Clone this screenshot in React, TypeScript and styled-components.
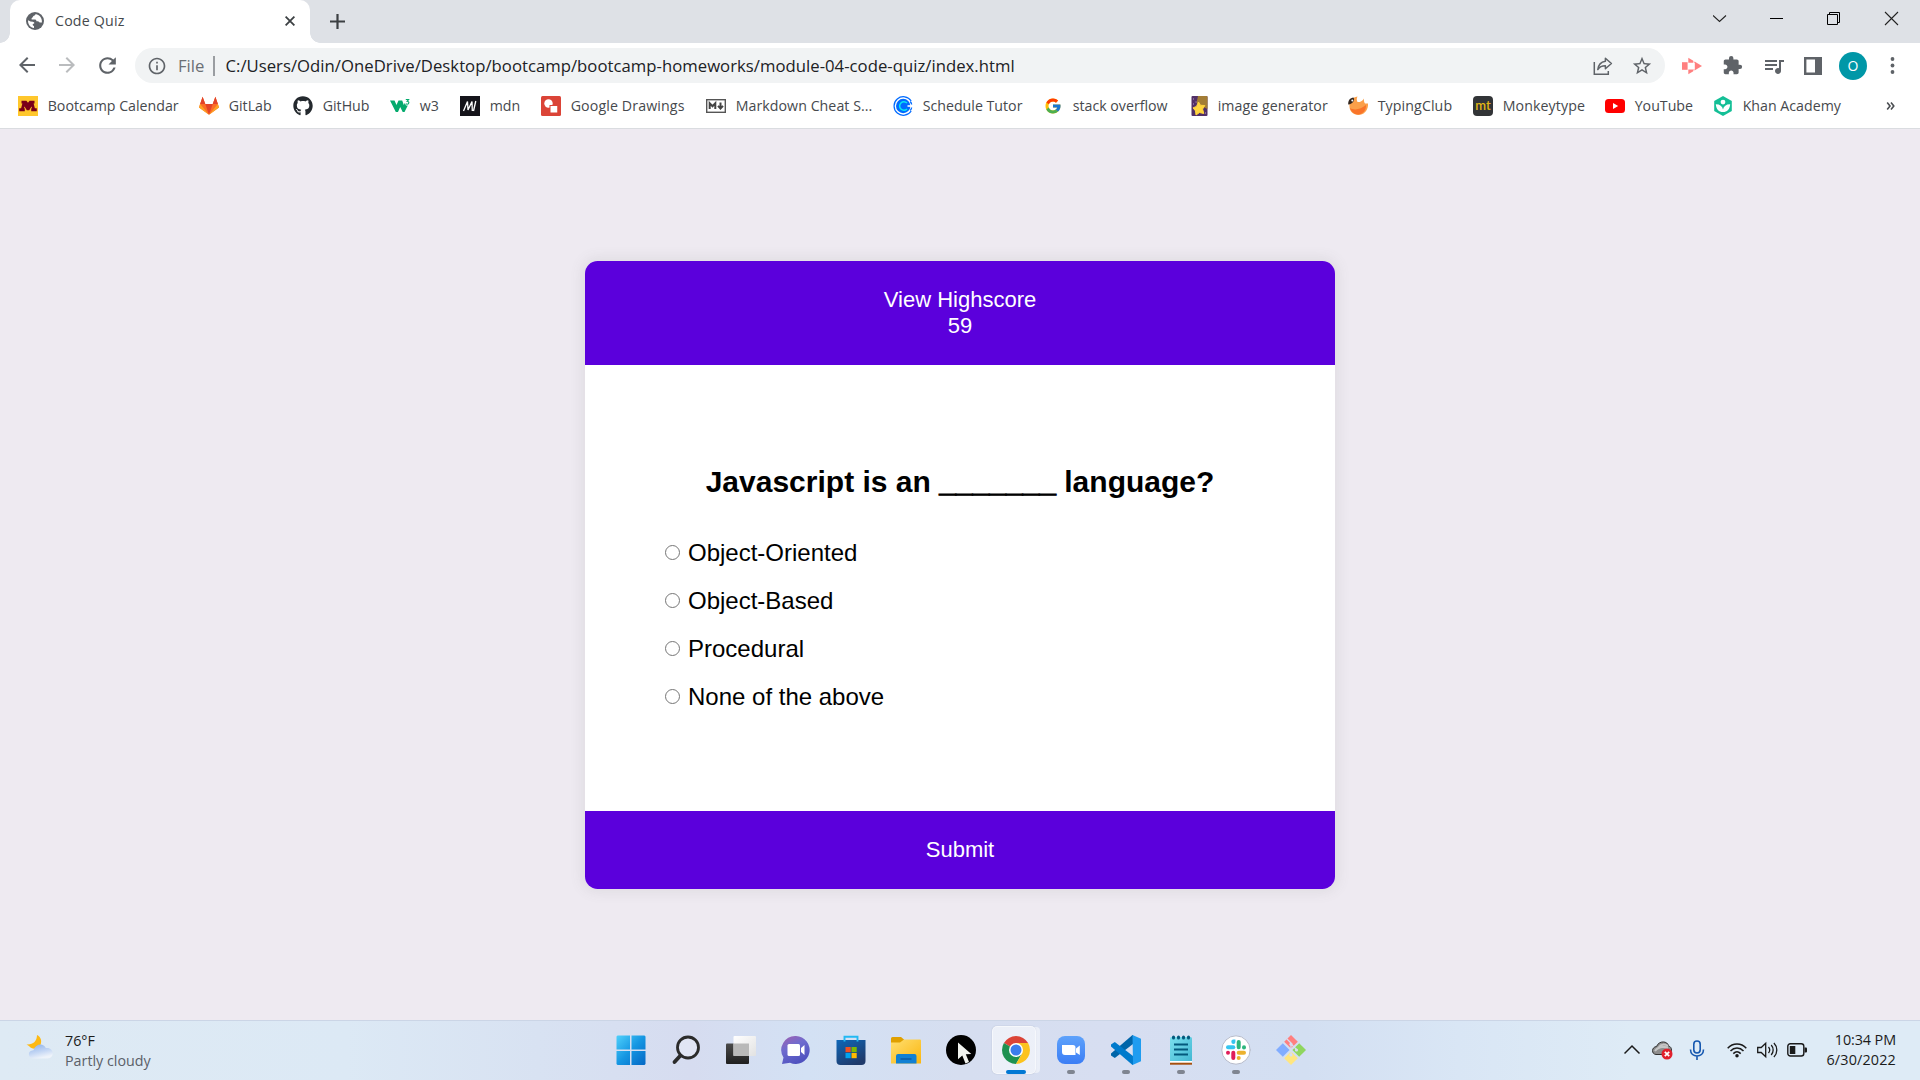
import React from "react";
import styled, { createGlobalStyle } from "styled-components";
import { MdArrowBack, MdArrowForward, MdRefresh, MdExtension, MdQueueMusic, MdStarBorder, MdInfoOutline } from "react-icons/md";
import { FaGithub } from "react-icons/fa";
import { FcGoogle } from "react-icons/fc";

const ui = `"Segoe UI", "Open Sans", "Noto Sans", sans-serif`;

const Global = createGlobalStyle`
  * { box-sizing: border-box; }
  html, body { margin: 0; padding: 0; }
  body { overflow: hidden; font-family: ${ui}; }
  svg { display: block; flex: none; }
`;

const Screen = styled.div`
  width: 1920px;
  height: 1080px;
  display: flex;
  flex-direction: column;
  background: #eeeaf1;
`;

/* ---------- tab strip ---------- */
const TabStrip = styled.header`
  height: 43px;
  display: flex;
  align-items: stretch;
  background: #dee1e6;
  padding-left: 10px;
`;
const Tab = styled.div`
  position: relative;
  width: 300px;
  display: flex;
  align-items: center;
  padding: 0 15px 1px 16px;
  background: #fff;
  border-radius: 10px 10px 0 0;
  font-size: 14.2px;
  color: #45494d;
  &::before, &::after {
    content: "";
    position: absolute;
    bottom: 0;
    width: 10px;
    height: 10px;
  }
  &::before { left: -10px; background: radial-gradient(circle at 0 0, transparent 9.5px, #fff 10px); }
  &::after { right: -10px; background: radial-gradient(circle at 100% 0, transparent 9.5px, #fff 10px); }
`;
const TabTitle = styled.span`
  flex: 1;
  padding: 0 0 1px 11px;
  letter-spacing: 0.2px;
`;
const NewTab = styled.div`
  padding: 13px 0 0 20px;
  flex: 1;
`;
const WindowControls = styled.div`
  display: flex;
  padding-top: 11px;
  gap: 41px;
  padding-right: 20px;
`;

/* ---------- toolbar ---------- */
const Toolbar = styled.div`
  height: 45px;
  display: flex;
  align-items: center;
  background: #fff;
  color: #5f6368;
`;
const NavButtons = styled.div`
  width: 135px;
  display: flex;
  gap: 16px;
  padding-left: 15px;
`;
const Omnibox = styled.div`
  width: 1530px;
  height: 35px;
  display: flex;
  align-items: center;
  border-radius: 18px;
  background: #f1f3f4;
  padding: 0 12px 0 12px;
  font-size: 16.7px;
  white-space: nowrap;
`;
const Scheme = styled.span`
  margin-left: 11px;
  color: #6b6f74;
`;
const Divider = styled.span`
  width: 2px;
  height: 20px;
  margin: 0 10px 0 9px;
  background: #9a9da1;
`;
const Url = styled.span`
  flex: 1;
  color: #202124;
  letter-spacing: 0.03px;
`;
const OmniActions = styled.div`
  display: flex;
  align-items: center;
  gap: 18px;
`;
const Extensions = styled.div`
  display: flex;
  align-items: center;
  padding-left: 17px;
`;
const ExtSlot = styled.div<{ $w?: number }>`
  width: ${(p) => p.$w ?? 40}px;
  display: flex;
  justify-content: flex-start;
`;
const Avatar = styled.div`
  width: 28px;
  height: 28px;
  border-radius: 50%;
  background: #0097a7;
  color: #fff;
  font-size: 14px;
  line-height: 27px;
  text-align: center;
`;

/* ---------- bookmarks ---------- */
const Bookmarks = styled.nav`
  height: 41px;
  display: flex;
  align-items: center;
  padding: 0 0 5px 18px;
  background: #fff;
  border-bottom: 1px solid #dadce0;
  font-size: 14.2px;
  color: #46494d;
`;
const Bookmark = styled.div<{ $w: number }>`
  width: ${(p) => p.$w}px;
  flex: none;
  display: flex;
  align-items: center;
  gap: 9.7px;
  white-space: nowrap;
`;
const BookmarkLabel = styled.span<{ $spacing?: number }>`
  letter-spacing: ${(p) => p.$spacing ?? 0}px;
`;

/* ---------- page ---------- */
const Page = styled.main`
  flex: 1;
  display: flex;
  align-items: center;
  justify-content: center;
  font-family: Arial, "Liberation Sans", sans-serif;
  padding-top: 1px;
`;
const QuizCard = styled.section`
  width: 750px;
  height: 628px;
  display: flex;
  flex-direction: column;
  background: #fff;
  border-radius: 12.5px;
  overflow: hidden;
  box-shadow: 0 0 12.5px 2.5px rgba(100, 100, 100, 0.1);
`;
const QuizHeader = styled.div`
  padding: 26px;
  background: #5b00dc;
  color: #fff;
  font-size: 22px;
  line-height: 26px;
  text-align: center;
`;
const QuizBody = styled.div`
  flex: 1;
  padding: 80px;
`;
const Question = styled.h2`
  margin: 0;
  padding: 20px 0;
  font-size: 30px;
  line-height: 34px;
  text-align: center;
  white-space: nowrap;
  color: #000;
`;
const Blank = styled.span`
  -webkit-text-stroke: 1px #000;
`;
const Answers = styled.ul`
  margin: 0;
  padding: 0;
  list-style: none;
`;
const Answer = styled.li`
  margin: 20px 0;
  height: 28px;
  font-size: 24px;
  line-height: 28px;
`;
const AnswerLabel = styled.label`
  display: flex;
  align-items: center;
  gap: 8px;
  color: #000;
`;
const Radio = styled.input`
  appearance: none;
  width: 15px;
  height: 15px;
  margin: 0 0 1px;
  border: 1.25px solid #767676;
  border-radius: 50%;
  background: #fff;
`;
const Submit = styled.button`
  height: 78px;
  border: 0;
  background: #5b00dc;
  color: #fff;
  font: 22px/26px Arial, "Liberation Sans", sans-serif;
`;

/* ---------- taskbar ---------- */
const Taskbar = styled.footer`
  height: 60px;
  display: flex;
  background: linear-gradient(90deg, #deeaf4 0%, #dce9f5 18%, #d8e2f2 28%, #d6dcf0 36%, #d3e1f4 42%, #d6def0 50%, #d7def1 58%, #d3dff2 68%, #d9e6f5 76%, #deebf6 85%, #deebf6 100%);
  border-top: 1px solid #cbd5e6;
`;
const Weather = styled.div`
  width: 603px;
  display: flex;
  padding: 10px 0 0 26px;
  gap: 11px;
  font-size: 14.3px;
  line-height: 20px;
  color: #1b1b1b;
`;
const Condition = styled.div`
  color: #5b6068;
`;
const Apps = styled.div`
  display: flex;
  width: 1021px;
`;
const AppSlot = styled.div<{ $state?: "open" | "active" }>`
  position: relative;
  width: 55px;
  height: 59px;
  display: flex;
  align-items: center;
  justify-content: center;
  padding: 0 0 1px 1px;
  &::after {
    content: "";
    display: ${(p) => (p.$state ? "block" : "none")};
    position: absolute;
    bottom: 6px;
    left: 50%;
    width: ${(p) => (p.$state === "active" ? 20 : 8)}px;
    height: 4px;
    margin-left: ${(p) => (p.$state === "active" ? -9.5 : -3.5)}px;
    border-radius: 2px;
    background: ${(p) => (p.$state === "active" ? "#0078d4" : "#7f8591")};
  }
`;
const ActivePlate = styled.div`
  position: absolute;
  left: 4px;
  top: 5px;
  width: 44px;
  height: 48px;
  border-radius: 5px;
  background: rgba(255, 255, 255, 0.55);
  border: 1px solid rgba(255, 255, 255, 0.5);
  box-shadow: 5px 0 0 -1px rgba(255, 255, 255, 0.5), 0 0 1px rgba(90, 100, 130, 0.5);
`;
const AppIcon = styled.div`
  position: relative;
`;
const Tray = styled.div`
  display: flex;
  align-items: center;
  height: 58px;
  width: 190px;
  color: #1a1a1a;
`;
const TraySlot = styled.div<{ $w: number }>`
  width: ${(p) => p.$w}px;
`;
const Clock = styled.div`
  flex: 1;
  padding: 9px 24px 0 0;
  font-size: 14.4px;
  line-height: 20px;
  text-align: right;
  letter-spacing: -0.1px;
  color: #1b1b1b;
`;
const DateLine = styled.div`
  letter-spacing: 0.15px;
`;

/* ---------- icon drawings ---------- */
const Globe = () => (
  <svg width="18" height="18" viewBox="0 0 18 18">
    <circle cx="9" cy="9" r="9" fill="#5f6368" />
    <path d="M9.6 2.1c-.2 1.1-.8 1.4-1.8 1.7-1 .4-.7 1.5-1.6 1.9-.8.4-1 1.4-.3 1.8h3.3c.8.1 1.2.8 1.2 1.7l1.5.1c.9.2 1.1 1 2 1.1h2c.4-4.2-2.5-7.6-6.3-8.3zM2.1 8.2c-.5 4 2.3 7.3 5.9 7.8v-1.9c-.9-.2-1.3-.9-1.3-1.8l1.6-1.1c.1-1-.7-1.4-1.5-1.5L4.5 9.4z" fill="#fff" />
  </svg>
);
const Cross = ({ size, width, color }: { size: number; width: number; color: string }) => (
  <svg width={size} height={size} viewBox="0 0 10 10">
    <path d="M.6.6l8.8 8.8M9.4.6L.6 9.4" stroke={color} strokeWidth={width} />
  </svg>
);
const Plus = () => (
  <svg width="15" height="17" viewBox="0 0 15 17">
    <path d="M7.5 1v15M0 8.5h15" stroke="#3c4043" strokeWidth="2.2" />
  </svg>
);
const ShareIcon = () => (
  <svg width="20" height="20" viewBox="0 0 20 20" fill="none" stroke="#5f6368" strokeWidth="1.5">
    <path d="M1.3 6v12.2h14V15" />
    <path d="M12.4 2.2l6 5.3-6 5.2V9.8c-3.7 0-5.9 1-7.6 3.7.5-4.6 3.1-7.6 7.6-8.3z" strokeLinejoin="round" />
  </svg>
);
const RecorderIcon = () => (
  <svg width="20" height="18" viewBox="0 0 20 18">
    <path d="M6.3.8L20 9 6.300 17.200z" fill="#ff8080" />
    <path d="M6 5.800h6.800v6.600H6zM11.500 2.500l1.300 2.200-1.500 1.500zM11.500 15.500l1.300-2.200-1.500-1.500z" fill="#fff" />
    <rect x="0" y="5.200" width="5.600" height="7.600" fill="#ff8080" />
  </svg>
);
const SidePanel = () => (
  <svg width="18" height="18" viewBox="0 0 18 18">
    <path d="M0 0h18v18H0zM2.4 2.4v13.2h8.6V2.4z" fillRule="evenodd" fill="#5f6368" />
  </svg>
);
const Kebab = () => (
  <svg width="5" height="17" viewBox="0 0 5 17" fill="#5f6368">
    <circle cx="2.5" cy="2" r="1.9" /><circle cx="2.5" cy="8.5" r="1.9" /><circle cx="2.5" cy="15" r="1.9" />
  </svg>
);
const Minnesota = () => (
  <svg width="20" height="20" viewBox="0 0 20 20">
    <rect width="20" height="20" fill="#ffc72c" />
    <path d="M3.500 4.800h4.900L10 6.800l1.600-2H16.500v2.700h-.9l1.300 4.700h1.900v3h-5.600v-3h.8l-.5-1.700-2.300 3.700H8.800l-2.300-3.700-.5 1.700h.8v3H1.200v-3h1.900l1.300-4.700h-.9z" fill="#7a0019" />
  </svg>
);
const GitLab = () => (
  <svg width="20" height="20" viewBox="0 0 20 20">
    <path d="M10 18.700L0 11.400 1.100 8 3.600.7 6.300 8h7.400L16.400.7 18.900 8 20 11.400z" fill="#fc6d26" />
    <path d="M10 18.700L6.300 8h7.400z" fill="#e24329" />
    <path d="M1.100 8L0 11.400l10 7.300zM18.900 8l1.100 3.400-10 7.300z" fill="#fca326" />
    <path d="M1.100 8h5.200L3.600.7zM18.900 8h-5.200L16.400.7z" fill="#e24329" />
  </svg>
);
const W3 = () => (
  <svg width="20" height="20" viewBox="0 0 20 20">
    <path d="M0 4.500h4.500L6.500 9l2-4.500h3.700L13.800 9l1-2 1.200 2.500h1.800L14.500 16h-1.800L10.200 11 8 16H5.800z" fill="#04aa6d" />
    <path d="M15.800 3.500h2.800l-1.500 1.800c2.500 0 2.200 3-.1 2.900l-1.200-.4" fill="none" stroke="#04aa6d" strokeWidth="1.1" />
  </svg>
);
const Mdn = () => (
  <svg width="20" height="20" viewBox="0 0 20 20">
    <rect width="20" height="20" fill="#15141a" />
    <path d="M3.500 15L7.500 5.500 8 14l4-8.500.3 9.500M15.800 5L13.500 15" fill="none" stroke="#fff" strokeWidth="1.300" />
  </svg>
);
const Drawings = () => (
  <svg width="20" height="20" viewBox="0 0 20 20">
    <rect width="20" height="20" rx="1.5" fill="#db4437" />
    <circle cx="7.5" cy="7.5" r="4.2" fill="#fff" />
    <rect x="9" y="9.5" width="7.8" height="7.5" fill="#fff" stroke="#db4437" />
  </svg>
);
const Markdown = () => (
  <svg width="20" height="20" viewBox="0 0 20 20">
    <rect x=".7" y="3.7" width="18.6" height="12.6" fill="#fff" stroke="#555" strokeWidth="1.4" />
    <path d="M3.7 13V7.2l2.8 3 2.8-3V13M14.5 6.5V12M12 9.9l2.5 2.6L17 9.9" fill="none" stroke="#444" strokeWidth="2" />
  </svg>
);
const Calendly = () => (
  <svg width="20" height="20" viewBox="0 0 20 20">
    <path d="M18.2 5A9.3 9.3 0 1 0 18.2 15" fill="none" stroke="#006bff" strokeWidth="1.2" />
    <circle cx="10.2" cy="10" r="7.2" fill="#006bff" />
    <path d="M14 7a4.300 4.300 0 1 0 0 6" fill="none" stroke="#0ae8f0" strokeWidth="1.5" />
    <path d="M14.5 10h5" stroke="#fff" strokeWidth="1.6" />
    <path d="M17.3 5.5q1.3 1.7 1.3 3M17.3 14.5q1.3-1.7 1.3-3" fill="none" stroke="#006bff" strokeWidth="1.3" />
  </svg>
);
const StarPicture = () => (
  <svg width="18" height="20" viewBox="2 0 18 20">
    <rect x="3.5" width="16" height="20" rx="1" fill="#523067" />
    <path d="M10 0h8.5a1 1 0 0 1 1 1v12l-6-3-5-3z" fill="#a37d35" />
    <path d="M10.5 6l2 3.3 4.3.2-2.2 3.6 1.2 4.4-4.3-1-3.5 2.5-.5-4.1-2.5-3 3.5-1.5z" fill="#ffd43d" stroke="#ffd43d" strokeLinejoin="round" />
    <path d="M5 3h1M7.5 6h1M5 8h1M17 17h1" stroke="#b99ad0" />
  </svg>
);
const TypingClub = () => (
  <svg width="20" height="20" viewBox="0 0 20 20">
    <path d="M1.5 9c-.5-4 3-7.5 8-8.500-1 2-1 3.500 0 5.500 2 .5 4.500-.5 6.500-3.500-.3 2 .2 4 1 5L20 7.500C20.500 14 16 19 10.500 19 5 19 1 15 1.500 9z" fill="#fba04a" />
    <path d="M2 12c5 3 11 1 16-3 .5 5-3.500 9.500-8 9.500-4 0-7-3-8-6.500z" fill="#f9742a" />
    <path d="M.2 8.500C0 4.500 2 1.800 5.500 1.500 7 4 5 8 .2 8.500z" fill="#33261f" />
    <circle cx="4.3" cy="4.5" r="1" fill="#fff" />
  </svg>
);
const MonkeyTile = styled.span`
  width: 20px;
  height: 20px;
  border-radius: 4px;
  background: #323437;
  color: #e2b714;
  font: 600 13px/18px Lato, "Open Sans", sans-serif;
  text-align: center;
`;
const YouTube = () => (
  <svg width="20" height="20" viewBox="0 0 20 20">
    <rect y="3" width="20" height="14" rx="3.5" fill="#f00" /><path d="M8 7l5.2 3L8 13z" fill="#fff" />
  </svg>
);
const Khan = () => (
  <svg width="20" height="20" viewBox="0 0 20 20">
    <path d="M10 0l8.800 5v10L10 20l-8.800-5V5z" fill="#14bf96" />
    <circle cx="10" cy="6.100" r="2.400" fill="#fff" />
    <path d="M2.800 8.200c4-.1 6.500 1.900 7.200 5.200.7-3.300 3.200-5.300 7.200-5.200-.4 5-3 7.800-7.200 7.800s-6.800-2.800-7.200-7.800z" fill="#fff" />
  </svg>
);

const WeatherIcon = () => (
  <svg width="28" height="28" viewBox="0 0 28 28">
    <defs>
      <linearGradient id="cloud" x1="0" y1="0" x2=".4" y2="1"><stop offset="0" stopColor="#8bb0e8" /><stop offset=".6" stopColor="#c3d6f4" /><stop offset="1" stopColor="#eef3fa" /></linearGradient>
    </defs>
    <path d="M11 4c4 2 5 6 3.600 9.500-2 5-8.500 5.500-11.600 1.500L.5 13.500C7 14 11 10 11 4z" fill="#fdb913" />
    <path d="M8 27.500c-6.500 0-7-8-.6-8.300C9.500 12.500 17.500 11.500 19.800 17 28.500 16 29 27 21.500 27.500z" fill="url(#cloud)" />
  </svg>
);
const WindowsIcon = () => (
  <svg width="30" height="30" viewBox="0 0 30 30">
    <defs><linearGradient id="win" x1="0" y1="0" x2="1" y2="1"><stop offset="0" stopColor="#4fd0fb" /><stop offset=".5" stopColor="#1596e2" /><stop offset="1" stopColor="#0467c4" /></linearGradient></defs>
    <path d="M1.5.5H14v14H.5v-13zM15.5.5h13l1 1v13h-14zM.5 16H14v14H1.5l-1-1zM15.5 16h14v13l-1 1h-13z" fill="url(#win)" />
  </svg>
);
const SearchIcon = () => (
  <svg width="30" height="30" viewBox="0 0 30 30" fill="none" stroke="#2b2b2b">
    <circle cx="17" cy="12.500" r="10.500" strokeWidth="2.800" fill="#ffffff44" />
    <path d="M9.500 20.500L3.500 27" strokeWidth="3.800" strokeLinecap="round" />
  </svg>
);
const TaskView = () => (
  <svg width="30" height="30" viewBox="0 0 30 30">
    <defs>
      <linearGradient id="dark" x1="0" y1="0" x2="0" y2="1"><stop offset="0" stopColor="#4a4a4a" /><stop offset="1" stopColor="#1f1f1f" /></linearGradient>
      <linearGradient id="lite" x1="0" y1="0" x2="1" y2="1"><stop offset="0" stopColor="#fff" /><stop offset="1" stopColor="#e2e2e2" /></linearGradient>
    </defs>
    <rect x="0" y="8.5" width="23" height="20.5" rx="1" fill="url(#dark)" />
    <rect x="7.5" y="1" width="22.5" height="20" rx="1" fill="url(#lite)" />
    <rect x="7.5" y="8.5" width="15.5" height="12.5" fill="#b9b9b9" />
  </svg>
);
const ChatIcon = () => (
  <svg width="30" height="30" viewBox="0 0 30 30">
    <defs><linearGradient id="chat" x1="0" y1="0" x2=".5" y2="1"><stop offset="0" stopColor="#a35fae" /><stop offset=".45" stopColor="#6f6ccf" /><stop offset="1" stopColor="#4f52bf" /></linearGradient></defs>
    <path d="M15 1a14 14 0 1 1-6 26.800L1 29l1.500-6.500A14 14 0 0 1 15 1z" fill="url(#chat)" />
    <rect x="6.5" y="9" width="12.5" height="12" rx="1.5" fill="#fff" />
    <path d="M20 13l3.500-3v10L20 17z" fill="#fff" />
  </svg>
);
const StoreIcon = () => (
  <svg width="30" height="30" viewBox="0 0 30 30">
    <defs><linearGradient id="store" x1="0" y1="0" x2=".6" y2="1"><stop offset="0" stopColor="#0f67b8" /><stop offset="1" stopColor="#1f3a6b" /></linearGradient></defs>
    <path d="M.5 5h29v21a4 4 0 0 1-4 4h-21a4 4 0 0 1-4-4z" fill="url(#store)" />
    <path d="M8.500 6.500V1.700h13v4.800" fill="none" stroke="#23b9f3" strokeWidth="1.900" />
    <path d="M9.500 12h5.200v5.200H9.500z" fill="#f25022" /><path d="M15.500 12h5.200v5.200h-5.200z" fill="#7fba00" />
    <path d="M9.500 18h5.200v5.200H9.500z" fill="#00a4ef" /><path d="M15.500 18h5.200v5.200h-5.200z" fill="#ffb900" />
  </svg>
);
const ExplorerIcon = () => (
  <svg width="30" height="30" viewBox="0 0 30 30">
    <defs><linearGradient id="fold" x1="0" y1="0" x2="1" y2="1"><stop offset="0" stopColor="#ffdf71" /><stop offset="1" stopColor="#fbb60e" /></linearGradient></defs>
    <path d="M0 3.500q0-1.500 1.500-1.500H10L13 4.500v5H0z" fill="#e0a000" />
    <path d="M0 7.500h9l4-3h16q1 0 1 1V28.500H0z" fill="url(#fold)" />
    <path d="M5 28.500V21q0-2 2-2h16.500q2 0 2 2v7.500z" fill="#1180d3" />
    <path d="M9.500 24h11" stroke="#0a549c" strokeWidth="1.300" />
  </svg>
);
const CursorIcon = () => (
  <svg width="30" height="30" viewBox="0 0 30 30">
    <circle cx="15" cy="15" r="15" fill="#000" />
    <path d="M12 7.500v16.700l4.300-3.800 3.200 8 3.500-1.500-3.200-7.600 5.500-.4z" fill="#f1f3ef" />
  </svg>
);
const ChromeIcon = () => (
  <svg width="28" height="28" viewBox="0 0 28 28">
    <path d="M14 14L1.900 7A14 14 0 0 1 26.100 7z" fill="#db4437" />
    <path d="M14 14L1.900 7A14 14 0 0 0 14 28l6-10.500z" fill="#1e9150" />
    <path d="M14 7h12.100A14 14 0 0 1 14 28l6.100-10.500z" fill="#fcc31e" />
    <circle cx="14" cy="14" r="7" fill="#fff" /><circle cx="14" cy="14" r="5.500" fill="#3b7ded" />
  </svg>
);
const ZoomIcon = () => (
  <svg width="28" height="28" viewBox="0 0 28 28">
    <defs><linearGradient id="zoom" x1="0" y1="0" x2="0" y2="1"><stop offset="0" stopColor="#5ea2fb" /><stop offset="1" stopColor="#3b7df5" /></linearGradient></defs>
    <rect width="28" height="28" rx="8" fill="url(#zoom)" />
    <path d="M5 9h11a2.500 2.500 0 0 1 2.500 2.500V19H8a3 3 0 0 1-3-3zM19 12.500L22.800 9.500v9.500L19 16.500z" fill="#fff" />
  </svg>
);
const CodeIcon = () => (
  <svg width="30" height="30" viewBox="0 0 30 30">
    <path d="M22 9L3.800 23 0 20.400v-2L21.500 0H22z" fill="#0065a9" />
    <path d="M22 21L3.800 7 0 9.600v2L21.500 30H22z" fill="#007acc" />
    <path d="M21.500 0L30 3.800v22.400L21.500 30 22 29z" fill="#1f9cf0" />
  </svg>
);
const NotepadIcon = () => (
  <svg width="24" height="30" viewBox="0 0 24 30">
    <defs><linearGradient id="note" x1="0" y1="0" x2="1" y2="1"><stop offset="0" stopColor="#7be0ee" /><stop offset="1" stopColor="#41b6d2" /></linearGradient></defs>
    <rect x="1" y="2" width="22" height="26" rx="1.500" fill="url(#note)" />
    <path d="M1 26h22v2H1z" fill="#fff" /><path d="M1 27.700h22v2H1z" fill="#a5500f" />
    <path d="M5 9.500h14M5 14.500h14M5 19.500h14" stroke="#03597c" strokeWidth="1.800" />
    <path d="M4.500 2v1M9.500 2v1M14.500 2v1M19.500 2v1" stroke="#03597c" strokeWidth="3" strokeLinecap="round" />
  </svg>
);
const SlackIcon = () => (
  <svg width="30" height="30" viewBox="0 0 30 30" strokeWidth="4" strokeLinecap="round">
    <circle cx="15" cy="15" r="14.200" fill="#fff" stroke="#b7bccb" strokeWidth="1" />
    <path d="M7 12.300h5.300" stroke="#36c5f0" /><path d="M12.300 6.500h.1v.5" stroke="#36c5f0" />
    <path d="M17.700 7v5.300M23 12.300v.1" stroke="#2eb67d" />
    <path d="M17.700 17.700H23M17.700 23v.1" stroke="#ecb22e" />
    <path d="M12.300 17.700V23M7 17.700v.1" stroke="#e01e5a" />
  </svg>
);
const GitIcon = () => (
  <svg width="30" height="30" viewBox="0 0 30 30">
    <path d="M15 0l6.800 6.800L15 13.600 8.200 6.800z" fill="#ff7f7f" />
    <path d="M23.200 8.200L30 15l-6.800 6.800-6.800-6.800z" fill="#8fd65f" />
    <path d="M6.800 8.200l6.800 6.800-6.800 6.800L0 15z" fill="#82adff" />
    <path d="M15 16.400l6.800 6.800L15 30l-6.800-6.800z" fill="#ffe680" />
    <path d="M10.500 3.500l4.500 4.500M15 8v11M16 10l4.500 4.500" stroke="#d7def1" strokeWidth="1.300" fill="none" />
    <circle cx="15" cy="9.200" r="1.600" fill="#d7def1" /><circle cx="20.500" cy="15" r="1.600" fill="#d7def1" /><circle cx="15" cy="20" r="1.600" fill="#d7def1" />
  </svg>
);
const GoogleSlot = styled.span`
  display: flex;
  width: 20px;
  justify-content: center;
`;

const bookmarks: { label: string; icon: React.ReactNode; w: number; spacing?: number }[] = [
  { label: "Bootcamp Calendar", icon: <Minnesota />, w: 181 },
  { label: "GitLab", icon: <GitLab />, w: 94 },
  { label: "GitHub", icon: <FaGithub size={20} color="#24292e" />, w: 97 },
  { label: "w3", icon: <W3 />, w: 70 },
  { label: "mdn", icon: <Mdn />, w: 81 },
  { label: "Google Drawings", icon: <Drawings />, w: 165, spacing: 0.12 },
  { label: "Markdown Cheat S...", icon: <Markdown />, w: 187, spacing: 0.05 },
  { label: "Schedule Tutor", icon: <Calendly />, w: 150 },
  { label: "stack overflow", icon: <GoogleSlot><FcGoogle size={18} /></GoogleSlot>, w: 147 },
  { label: "image generator", icon: <StarPicture />, w: 158, spacing: 0.05 },
  { label: "TypingClub", icon: <TypingClub />, w: 125, spacing: 0.1 },
  { label: "Monkeytype", icon: <MonkeyTile>mt</MonkeyTile>, w: 132, spacing: 0.1 },
  { label: "YouTube", icon: <YouTube />, w: 108 },
  { label: "Khan Academy", icon: <Khan />, w: 173 },
];

const apps: { id: string; icon: React.ReactNode; state?: "open" | "active" }[] = [
  { id: "start", icon: <WindowsIcon /> },
  { id: "search", icon: <SearchIcon /> },
  { id: "tasks", icon: <TaskView /> },
  { id: "chat", icon: <ChatIcon /> },
  { id: "store", icon: <StoreIcon /> },
  { id: "files", icon: <ExplorerIcon /> },
  { id: "cursor", icon: <CursorIcon /> },
  { id: "chrome", icon: <ChromeIcon />, state: "active" },
  { id: "zoom", icon: <ZoomIcon />, state: "open" },
  { id: "code", icon: <CodeIcon />, state: "open" },
  { id: "notepad", icon: <NotepadIcon />, state: "open" },
  { id: "slack", icon: <SlackIcon />, state: "open" },
  { id: "git", icon: <GitIcon /> },
];

const answers = ["Object-Oriented", "Object-Based", "Procedural", "None of the above"];

export default function App() {
  return (
    <Screen>
      <Global />
      <TabStrip>
        <Tab>
          <Globe />
          <TabTitle>Code Quiz</TabTitle>
          <Cross size={10} width={1.8} color="#3c4043" />
        </Tab>
        <NewTab><Plus /></NewTab>
        <WindowControls>
          <svg width="16" height="16" viewBox="0 0 16 16"><path d="M0 4.500l6.500 6 6.500-6" fill="none" stroke="#222" strokeWidth="1.100" /></svg>
          <svg width="16" height="16" viewBox="0 0 16 16"><path d="M0 7.500h13" stroke="#000" /></svg>
          <svg width="16" height="16" viewBox="0 0 16 16"><path d="M.5 3.500h10v10H.5zM2.500 3.500v-2h10v10h-2" fill="none" stroke="#000" /></svg>
          <svg width="16" height="16" viewBox="0 0 16 16"><path d="M1 1l13 13M14 1L1 14" stroke="#222" strokeWidth="1.100" /></svg>
        </WindowControls>
      </TabStrip>

      <Toolbar>
        <NavButtons>
          <MdArrowBack size={24} />
          <MdArrowForward size={24} color="#babcbe" />
          <MdRefresh size={25} />
        </NavButtons>
        <Omnibox>
          <MdInfoOutline size={20} />
          <Scheme>File</Scheme>
          <Divider />
          <Url>C:/Users/Odin/OneDrive/Desktop/bootcamp/bootcamp-homeworks/module-04-code-quiz/index.html</Url>
          <OmniActions>
            <ShareIcon />
            <MdStarBorder size={22} />
          </OmniActions>
        </Omnibox>
        <Extensions>
          <ExtSlot><RecorderIcon /></ExtSlot>
          <ExtSlot><MdExtension size={21} /></ExtSlot>
          <ExtSlot $w={42}><MdQueueMusic size={24} /></ExtSlot>
          <ExtSlot $w={35}><SidePanel /></ExtSlot>
          <ExtSlot $w={51}><Avatar>O</Avatar></ExtSlot>
          <Kebab />
        </Extensions>
      </Toolbar>

      <Bookmarks>
        {bookmarks.map((b) => (
          <Bookmark key={b.label} $w={b.w}>
            {b.icon}
            <BookmarkLabel $spacing={b.spacing}>{b.label}</BookmarkLabel>
          </Bookmark>
        ))}
        <svg width="10" height="10" viewBox="0 0 10 10"><path d="M1.200 1.500L4 5 1.200 8.500M5 1.500L7.800 5 5 8.500" fill="none" stroke="#4a4d51" strokeWidth="1.600" /></svg>
      </Bookmarks>

      <Page>
        <QuizCard>
          <QuizHeader>
            <div>View Highscore</div>
            <div>59</div>
          </QuizHeader>
          <QuizBody>
            <Question>Javascript is an <Blank>_______</Blank> language?</Question>
            <Answers>
              {answers.map((a) => (
                <Answer key={a}>
                  <AnswerLabel>
                    <Radio type="radio" name="answer" />
                    {a}
                  </AnswerLabel>
                </Answer>
              ))}
            </Answers>
          </QuizBody>
          <Submit>Submit</Submit>
        </QuizCard>
      </Page>

      <Taskbar>
        <Weather>
          <WeatherIcon />
          <div>
            <div>76°F</div>
            <Condition>Partly cloudy</Condition>
          </div>
        </Weather>
        <Apps>
          {apps.map((a) => (
            <AppSlot key={a.id} $state={a.state}>
              {a.state === "active" && <ActivePlate />}
              <AppIcon>{a.icon}</AppIcon>
            </AppSlot>
          ))}
        </Apps>
        <Tray>
          <TraySlot $w={28}>
            <svg width="17" height="16" viewBox="0 0 17 16"><path d="M.5 11.500L8 4l7.500 7.500" fill="none" stroke="#1a1a1a" strokeWidth="1.500" /></svg>
          </TraySlot>
          <TraySlot $w={37}>
            <svg width="21" height="20" viewBox="0 0 21 20">
              <path d="M4 14.500C-1 14-.5 7 4.500 6.500 7 0 16 1 16.500 6c4 .5 4 8 0 8.500z" fill="#8d8d8d" stroke="#303030" strokeWidth="1" />
              <path d="M3 11c3-4 8-5 13-3M7 7c2-3 6-3 9-1" fill="none" stroke="#c6c6c6" strokeWidth="2" />
              <circle cx="15" cy="14" r="5.500" fill="#e0202c" />
              <path d="M12.800 11.800l4.400 4.400M17.200 11.800l-4.400 4.400" stroke="#fff" strokeWidth="1.700" />
            </svg>
          </TraySlot>
          <TraySlot $w={38}>
            <svg width="16" height="20" viewBox="0 0 16 20" fill="none" stroke="#1658b0" strokeWidth="1.600"><rect x="4.800" y="1" width="6.400" height="12" rx="3.200" /><path d="M1.500 9.500c0 8.600 13 8.600 13 0M8 16v4" /></svg>
          </TraySlot>
          <TraySlot $w={30}>
            <svg width="20" height="16" viewBox="0 0 20 16" fill="none" stroke="#1a1a1a" strokeWidth="1.500"><path d="M.7 6.200c5.200-5.600 13.400-5.600 18.600 0M3.500 8.900c3.700-3.900 9.300-3.900 13 0M6.300 11.600c2.200-2.200 5.200-2.200 7.400 0" /><circle cx="10" cy="13.700" r="1" fill="#1a1a1a" /></svg>
          </TraySlot>
          <TraySlot $w={30}>
            <svg width="21" height="18" viewBox="0 0 21 18" fill="none" stroke="#1a1a1a" strokeWidth="1.300"><path d="M.7 6.500h3.500L8.700 2.300v13.400L4.200 11.500H.7zM11.500 6c1.400 1.700 1.400 4.300 0 6M14.200 4c2.600 2.800 2.600 7.200 0 10M16.900 2c3.900 4 3.900 10 0 14" /></svg>
          </TraySlot>
          <TraySlot $w={20}>
            <svg width="21" height="14" viewBox="0 0 21 14"><rect x=".8" y=".8" width="16" height="12.200" rx="2.500" fill="none" stroke="#1a1a1a" strokeWidth="1.400" /><rect x="2.800" y="3" width="5.500" height="8" fill="#1a1a1a" /><path d="M17.500 4.500h1.500q1 0 1 1v3q0 1-1 1h-1.500z" fill="#1a1a1a" /></svg>
          </TraySlot>
        </Tray>
        <Clock>
          <div>10:34 PM</div>
          <DateLine>6/30/2022</DateLine>
        </Clock>
      </Taskbar>
    </Screen>
  );
}
